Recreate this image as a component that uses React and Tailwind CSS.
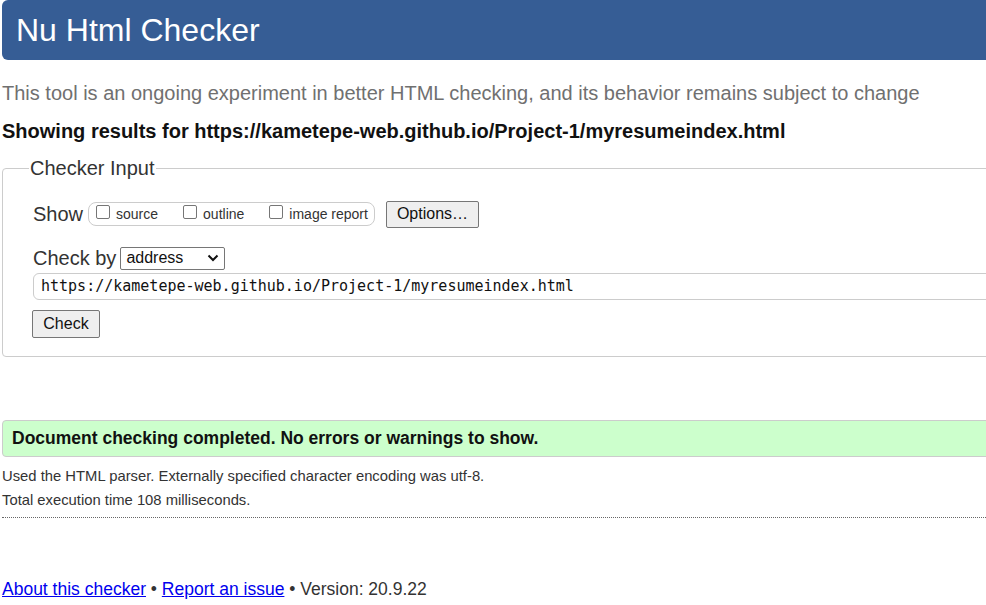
export default function App() {
  return (
    <div className="w-full min-h-screen overflow-hidden bg-white font-['Liberation_Sans',Arial,sans-serif]">
      <div className="w-[1010px] pl-[2px]">
        {/* header */}
        <header className="h-[60px] bg-[#365d95] rounded-[6px] flex items-center pl-[14px]">
          <h1 className="text-[32px] text-white leading-none">Nu Html Checker</h1>
        </header>

        <p className="mt-[22px] text-[20px] leading-[23px] text-[#707070]">
          This tool is an ongoing experiment in better HTML checking, and its behavior remains subject to change
        </p>

        <p className="mt-[15px] text-[20px] leading-[23px] font-bold text-[#111]">
          Showing results for https://kametepe-web.github.io/Project-1/myresumeindex.html
        </p>

        {/* checker input */}
        <fieldset className="mt-[14px] border border-[#ccc] rounded-[4px] px-[30px] pb-[18px] pt-[20px]">
          <legend className="text-[20px] leading-[22px] text-[#333] -ml-[4px] px-[1px]">Checker Input</legend>

          <div className="flex items-center">
            <span className="text-[20px] text-[#333] mr-[5px]">Show</span>
            <div className="flex items-center h-[24px] border border-[#ccc] rounded-[8px] pl-[7px] pr-[6px] text-[14px] text-[#333]">
              <label className="flex items-center mr-[25px]">
                <span className="w-[14px] h-[14px] border border-[#767676] rounded-[2px] mr-[6px] -mt-[4px] bg-white" />
                source
              </label>
              <label className="flex items-center mr-[25px]">
                <span className="w-[14px] h-[14px] border border-[#767676] rounded-[2px] mr-[6px] -mt-[4px] bg-white" />
                outline
              </label>
              <label className="flex items-center">
                <span className="w-[14px] h-[14px] border border-[#767676] rounded-[2px] mr-[6px] -mt-[4px] bg-white" />
                image report
              </label>
            </div>
            <button className="ml-[11px] h-[27px] px-[10px] bg-[#efefef] border border-[#767676] rounded-[2px] text-[16px] text-[#111]">
              Options…
            </button>
          </div>

          <div className="flex items-center mt-[14px]">
            <span className="text-[20px] text-[#333] mr-[4px]">Check by</span>
            <div className="flex items-center justify-between w-[105px] h-[23px] border border-[#767676] rounded-[2px] pl-[5px] pr-[5px] text-[16px] text-[#111]">
              <span>address</span>
              <svg width="12" height="8" viewBox="0 0 12 8" fill="none" stroke="#111" strokeWidth="2">
                <path d="M1.5 1.5l4.5 4.5 4.5-4.5" />
              </svg>
            </div>
          </div>

          <div className="-mr-[40px] h-[27px] border border-[#ccc] rounded-l-[6px] flex items-center pl-[7px] font-['DejaVu_Sans_Mono',monospace] text-[15px] text-[#111]">
            https://kametepe-web.github.io/Project-1/myresumeindex.html
          </div>

          <button className="mt-[10px] h-[28px] w-[68px] -ml-[1px] bg-[#efefef] border border-[#767676] rounded-[2px] text-[16px] text-[#111]">
            Check
          </button>
        </fieldset>

        {/* result */}
        <div className="mt-[63px] h-[37px] bg-[#ccffcc] border border-[#ccc] rounded-l-[4px] flex items-center pl-[9px] text-[17.5px] font-bold text-[#111]">
          Document checking completed. No errors or warnings to show.
        </div>

        <p className="mt-[10px] text-[14.8px] leading-[18px] text-[#333]">
          Used the HTML parser. Externally specified character encoding was utf-8.
        </p>
        <p className="mt-[6px] text-[14.8px] leading-[18px] text-[#333]">
          Total execution time 108 milliseconds.
        </p>

        <hr className="mt-[8px] border-0 border-t border-dotted border-[#666]" />

        <p className="mt-[61px] text-[17.5px] leading-[21px] text-[#333]">
          <a href="#" className="text-[#0000ee] underline">About this checker</a>
          {" • "}
          <a href="#" className="text-[#0000ee] underline">Report an issue</a>
          {" • Version: 20.9.22"}
        </p>
      </div>
    </div>
  );
}
